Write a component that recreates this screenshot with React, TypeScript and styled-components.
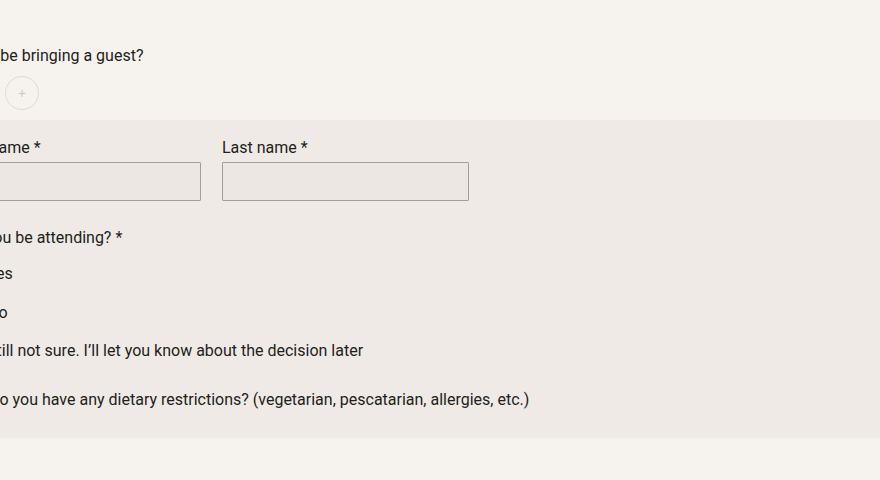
import styled, { createGlobalStyle } from 'styled-components';

const GlobalStyle = createGlobalStyle`
  html, body {
    margin: 0;
    padding: 0;
    background-color: #f6f2ee;
  }
  body {
    font-family: Roboto, Lato, sans-serif;
    color: #221e1b;
    overflow: hidden;
  }
`;

export const Page = styled.main`
  width: 880px;
  height: 480px;
  overflow: hidden;
  background-color: #f6f2ee;
`;

export const GuestSection = styled.section`
  display: flex;
  flex-direction: column;
  padding: 45px 0 10px;
  margin-left: -59px;
`;

export const Label = styled.label`
  display: block;
  font-size: 16px;
  line-height: 22px;
  font-weight: 400;
  white-space: nowrap;
`;

export const Stepper = styled.div`
  display: flex;
  align-items: center;
  margin-top: 9px;
`;

export const StepButton = styled.button`
  display: flex;
  justify-content: center;
  align-items: center;
  width: 34px;
  height: 34px;
  padding: 0;
  border-radius: 50%;
  border: 1.5px solid #e0d9d4;
  background: transparent;
  color: #cfc7c1;
  font-size: 14px;
  line-height: 1;
  cursor: pointer;
`;

export const Count = styled.span`
  width: 30px;
  text-align: center;
  font-size: 16px;
`;

export const Band = styled.section`
  display: flex;
  flex-direction: column;
  background-color: #efeae6;
  padding: 17px 0 27px 0;
`;

export const Inner = styled.div`
  display: flex;
  flex-direction: column;
  margin-left: -46px;
`;

export const NameRow = styled.div`
  display: grid;
  grid-template-columns: 247px 247px;
  column-gap: 21px;
`;

export const Field = styled.div`
  display: flex;
  flex-direction: column;
  gap: 3px;
`;

export const Input = styled.input`
  box-sizing: border-box;
  height: 39px;
  width: 100%;
  background-color: #ece7e3;
  border: 1.5px solid #a39e9a;
  border-radius: 1px;
  padding: 0 8px;
  font-family: inherit;
  font-size: 16px;
`;

export const Fieldset = styled.fieldset`
  border: 0;
  margin: 26px 0 0;
  padding: 0;
  display: flex;
  flex-direction: column;
`;

export const Options = styled.div`
  display: flex;
  flex-direction: column;
  margin-top: 14px;
  gap: 16.5px;
`;

export const Option = styled.label<{ $top?: number; $gap?: number }>`
  display: flex;
  align-items: center;
  gap: ${({ $gap }) => $gap ?? 11}px;
  font-size: 16px;
  line-height: 22px;
  white-space: nowrap;
  margin-top: ${({ $top }) => $top ?? 0}px;
`;

export const Radio = styled.input`
  appearance: none;
  margin: 0;
  width: 22px;
  height: 22px;
  border-radius: 50%;
  border: 1.5px solid #a39e9a;
  background: #f6f2ee;
`;

export const Checkbox = styled.input`
  appearance: none;
  margin: 0;
  width: 22px;
  height: 22px;
  border-radius: 2px;
  border: 1.5px solid #a39e9a;
  background: #f6f2ee;
`;

const App = () => (
  <Page>
    <GlobalStyle />
    <GuestSection>
      <Label>Will you be bringing a guest?</Label>
      <Stepper>
        <StepButton type="button">−</StepButton>
        <Count>0</Count>
        <StepButton type="button">+</StepButton>
      </Stepper>
    </GuestSection>
    <Band>
      <Inner>
        <NameRow>
          <Field>
            <Label>First name *</Label>
            <Input type="text" />
          </Field>
          <Field>
            <Label>Last name *</Label>
            <Input type="text" />
          </Field>
        </NameRow>
        <Fieldset>
          <Label as="legend">Will you be attending? *</Label>
          <Options>
            <Option>
              <Radio type="radio" name="attending" />
              Yes
            </Option>
            <Option>
              <Radio type="radio" name="attending" />
              No
            </Option>
            <Option>
              <Radio type="radio" name="attending" />
              Still not sure. I’ll let you know about the decision later
            </Option>
          </Options>
        </Fieldset>
        <Option $top={27} $gap={13}>
          <Checkbox type="checkbox" />
          Do you have any dietary restrictions? (vegetarian, pescatarian, allergies, etc.)
        </Option>
      </Inner>
    </Band>
  </Page>
);

export default App;
